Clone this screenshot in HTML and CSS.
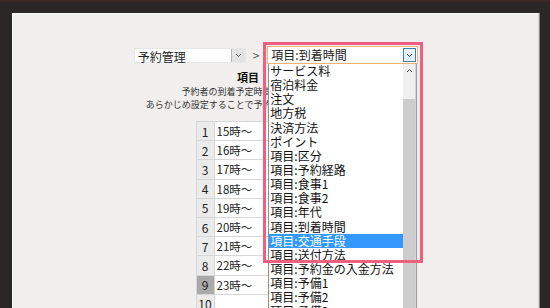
FILE: index.html
```html
<!DOCTYPE html>
<html lang="ja">
<head>
    <meta charset="UTF-8">
    <title>項目設定</title>
    <link rel="stylesheet" href="styles.css">
</head>
<body>
    <div class="paper">
        <div class="crumbs">
            <div class="select plain">
                <span class="select-text">予約管理</span>
                <span class="select-btn">
                    <svg width="7" height="5" viewBox="0 0 7 5"><polyline points="1,1 3.5,3.5 6,1" fill="none" stroke="#555" stroke-width="1"/></svg>
                </span>
            </div>
            <span class="sep">&gt;</span>
            <div class="select-wrap">
                <div class="select active">
                    <span class="select-text">項目:到着時間</span>
                    <span class="select-btn">
                        <svg width="7" height="5" viewBox="0 0 7 5"><polyline points="1,1 3.5,3.5 6,1" fill="none" stroke="#333" stroke-width="1"/></svg>
                    </span>
                </div>
                <div class="dropdown">
                    <ul class="options">
                        <li>サービス料</li>
                        <li>宿泊料金</li>
                        <li>注文</li>
                        <li>地方税</li>
                        <li>決済方法</li>
                        <li>ポイント</li>
                        <li>項目:区分</li>
                        <li>項目:予約経路</li>
                        <li>項目:食事1</li>
                        <li>項目:食事2</li>
                        <li>項目:年代</li>
                        <li>項目:到着時間</li>
                        <li class="hover">項目:交通手段</li>
                        <li>項目:送付方法</li>
                        <li>項目:予約金の入金方法</li>
                        <li>項目:予備1</li>
                        <li>項目:予備2</li>
                        <li>項目:予備3</li>
                    </ul>
                    <div class="scrollbar">
                        <span class="arrow">
                            <svg width="7" height="5" viewBox="0 0 7 5"><polyline points="1,4 3.5,1.5 6,4" fill="none" stroke="#444" stroke-width="1"/></svg>
                        </span>
                        <div class="thumb"></div>
                    </div>
                </div>
                <div class="highlight-box"></div>
            </div>
        </div>

        <h2 class="item-title">項目：到着時間</h2>
        <p class="desc">予約者の到着予定時間を登録できる項目です。<br>あらかじめ設定することで予約時に選択できるようになります。</p>

        <table class="choices">
            <tr><td class="num">1</td><td>15時〜</td></tr>
            <tr><td class="num">2</td><td>16時〜</td></tr>
            <tr><td class="num">3</td><td>17時〜</td></tr>
            <tr><td class="num">4</td><td>18時〜</td></tr>
            <tr><td class="num">5</td><td>19時〜</td></tr>
            <tr><td class="num">6</td><td>20時〜</td></tr>
            <tr><td class="num">7</td><td>21時〜</td></tr>
            <tr><td class="num">8</td><td>22時〜</td></tr>
            <tr><td class="num current">9</td><td>23時〜</td></tr>
            <tr><td class="num">10</td><td></td></tr>
            <tr><td class="num">11</td><td></td></tr>
        </table>
    </div>
</body>
</html>
```

FILE: styles.css
```css
html, body {
    height: 308px;
    overflow: hidden;
}
body {
    margin: 0;
    background-color: #2b2727;
    border-top: 2px solid #3a2a22;
    font-family: "Noto Sans CJK JP", "Noto Sans", sans-serif;
    color: #222;
}
.paper {
    margin: 11px 12px 0 12px;
    height: 300px;
    padding-top: 32px;
    background-color: #f0efed;
    border-top: 1px solid #fafafa;
    border-left: 1px solid #fafafa;
    box-shadow: 1px 0 0 #d8d8d8, 2px 0 0 #8a8686;
    box-sizing: border-box;
}
.crumbs {
    display: flex;
    justify-content: center;
    align-items: center;
    height: 18px;
    padding-left: 1px;
}
.sep {
    font-size: 12px;
    color: #555;
    margin: 0 8px 0 7px;
    line-height: 18px;
}
.select {
    display: flex;
    align-items: stretch;
    background-color: #fff;
    box-sizing: border-box;
}
.select-text {
    flex: 1;
    font-size: 12px;
    line-height: 15px;
    padding-left: 3px;
    color: #222;
    white-space: nowrap;
}
.select-btn {
    display: flex;
    align-items: center;
    justify-content: center;
    box-sizing: border-box;
}
.plain {
    width: 112px;
    height: 15px;
    border: 1px solid #e6e6e6;
}
.plain .select-btn {
    width: 14px;
    background-color: #e3e3e3;
    border-left: 1px solid #b5b5b5;
}
.select-wrap {
    position: relative;
    width: 151px;
}
.active {
    height: 18px;
    border: 1px solid #f2b27a;
}
.active .select-text {
    line-height: 16px;
}
.active .select-btn {
    width: 13px;
    margin: 1px 1px 1px 0;
    background-color: #e5f1fb;
    border: 1px solid #3c7fb1;
}
.dropdown {
    position: absolute;
    top: 18px;
    left: 1px;
    width: 149px;
    height: 260px;
    display: flex;
    background-color: #fff;
    border-left: 1px solid #8f8f8f;
    border-right: 1px solid #9c9c9c;
    box-sizing: border-box;
    z-index: 2;
}
.options {
    list-style-type: none;
    margin: 0;
    padding: 0;
    flex: 1;
}
.options li {
    font-size: 12px;
    line-height: 14.15px;
    height: 14.15px;
    padding-left: 1px;
    color: #111;
    white-space: nowrap;
}
.options li.hover {
    background-color: #3399ff;
    color: #fff;
}
.scrollbar {
    width: 12px;
    background-color: #f0f0f0;
    display: flex;
    flex-direction: column;
    border-right: 1px solid #d4d4d4;
}
.scrollbar .arrow {
    display: flex;
    justify-content: center;
    padding-top: 4px;
    height: 13px;
}
.scrollbar .thumb {
    margin-top: 18px;
    flex: 1;
    background-color: #cdcdcd;
}
.highlight-box {
    position: absolute;
    top: -4px;
    left: -4px;
    width: 160px;
    height: 221px;
    border: 3px solid #ef5f80;
    box-sizing: border-box;
    z-index: 3;
}
.item-title {
    margin: 0;
    text-align: center;
    font-size: 11px;
    line-height: 15px;
    margin-top: 6px;
    font-weight: bold;
    color: #111;
}
.desc {
    margin: 0;
    text-align: center;
    font-size: 9px;
    line-height: 13px;
    color: #333;
}
.choices {
    margin: 10px auto 0 auto;
    width: 160px;
    border-collapse: collapse;
    background-color: #fff;
}
.choices tr {
    height: 19.2px;
}
.choices td {
    border: 1px solid #d6d6d6;
    padding: 0 0 0 2px;
    font-size: 11.5px;
    color: #222;
}
.choices td.num {
    width: 17px;
    padding: 0;
    text-align: center;
    font-size: 12px;
    background-color: #ebebeb;
}
.choices td.current {
    background-color: #a9a9a9;
}
```
